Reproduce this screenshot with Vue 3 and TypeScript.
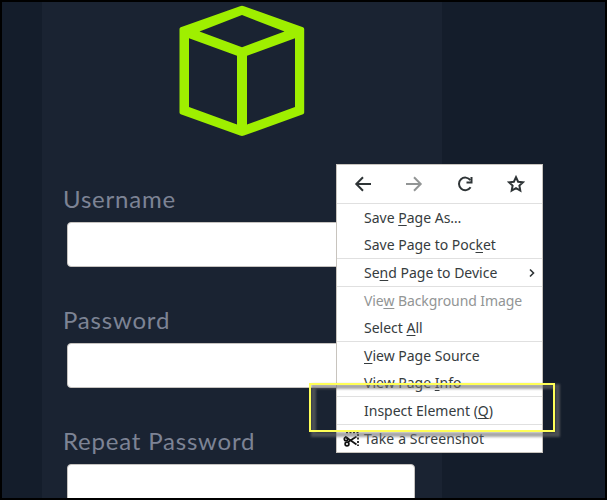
<script setup lang="ts">
interface MenuItem {
  before: string
  key?: string
  after?: string
  disabled?: boolean
  submenu?: boolean
  icon?: boolean
}

const fields: string[] = ['Username', 'Password', 'Repeat Password']

const groups: MenuItem[][] = [
  [
    { before: 'Save ', key: 'P', after: 'age As…' },
    { before: 'Save Page to Poc', key: 'k', after: 'et' },
  ],
  [{ before: 'Se', key: 'n', after: 'd Page to Device', submenu: true }],
  [
    { before: 'Vie', key: 'w', after: ' Background Image', disabled: true },
    { before: 'Select ', key: 'A', after: 'll' },
  ],
  [
    { before: '', key: 'V', after: 'iew Page Source' },
    { before: 'View Page ', key: 'I', after: 'nfo' },
  ],
  [{ before: 'Inspect Element (', key: 'Q', after: ')' }],
  [{ before: 'Take a Screenshot', icon: true }],
]
</script>

<template>
  <div class="page">
    <main class="card">
      <svg class="logo" width="126" height="132" viewBox="0 0 126 132">
        <path
          fill="#9fef00"
          fill-rule="evenodd"
          d="M61 1.300Q63 .4 65 1.300L124 22.300Q125.200 22.800 125.200 24V107.500Q125.200 108.700 124 109.200L65 130.500Q63 131.400 61 130.500L1.700 109.200Q.5 108.700 .5 107.500V24Q.5 22.800 1.700 22.300ZM63 10 20.500 26.500 63 42.300 105.500 26.500ZM10 33.300V102L58 119.500V50.700ZM116 33.300 68 50.700V119.500L116 102Z"
        />
      </svg>
      <form class="form">
        <div v-for="label in fields" :key="label" class="field">
          <label class="label"><span>{{ label }}</span></label>
          <div class="input"></div>
        </div>
      </form>
    </main>

    <div class="menu">
      <div class="toolbar">
        <svg width="18" height="18" viewBox="0 0 18 18"><path d="M17 9H2.500M9 2.300 2.300 9 9 15.700" /></svg>
        <svg class="dim" width="18" height="18" viewBox="0 0 18 18"><path d="M1 9H15.500M9 2.300 15.700 9 9 15.700" /></svg>
        <svg width="18" height="18" viewBox="0 0 18 18">
          <path d="M14.600 12.300A6.300 6.300 0 1 1 14.400 5.200" />
          <path d="M10.500 7.500H15.500V2" />
        </svg>
        <svg width="18" height="18" viewBox="0 0 18 18">
          <path d="M9 2.200 11.100 6.700 16 7.300 12.400 10.600 13.300 15.600 9 13.200 4.700 15.600 5.600 10.600 2 7.300 6.900 6.700Z" />
        </svg>
      </div>
      <div v-for="(group, i) in groups" :key="i" class="group">
        <div
          v-for="item in group"
          :key="item.before + item.key"
          class="item"
          :class="{ disabled: item.disabled, action: item.icon }"
        >
          <span class="slot">
            <svg v-if="item.icon" class="scissors" width="17" height="16" viewBox="0 0 17 16">
              <path class="dots" d="M3 1.500H16M15 3V15" />
              <path d="M2 5.500 13.500 13.500M13.500 5.500 5 11" />
              <circle cx="3" cy="8" r="1.700" />
              <circle cx="4" cy="13" r="1.900" />
            </svg>
          </span>
          <span class="text">{{ item.before }}<u v-if="item.key">{{ item.key }}</u>{{ item.after }}</span>
          <svg v-if="item.submenu" class="chevron" width="6" height="10" viewBox="0 0 6 10"><path d="M1 1.500 4.500 5 1 8.500" /></svg>
        </div>
      </div>
    </div>

    <div class="highlight"></div>
  </div>
</template>

<style>
body {
  margin: 0;
}
</style>

<style scoped>
.page {
  position: relative;
  box-sizing: border-box;
  width: 607px;
  height: 500px;
  overflow: hidden;
  border: 2px solid #000;
  background: #141d2b;
}
.card {
  display: flex;
  flex-direction: column;
  box-sizing: border-box;
  width: 400px;
  height: 496px;
  margin-left: 40px;
  padding: 3px 27px 0 21px;
  overflow: hidden;
  background: #1a2332;
}
.logo {
  flex: none;
  margin-left: 116px;
}
.form {
  display: flex;
  flex-direction: column;
  margin-top: 44px;
}
.field {
  height: 121px;
}
.label {
  display: block;
  height: 41px;
  color: #7d8395;
  font: 24px/36px Lato, "Noto Sans", sans-serif;
  letter-spacing: 0.8px;
  white-space: nowrap;
}
.input {
  box-sizing: border-box;
  height: 45px;
  margin-left: 4px;
  border: 1px solid #c6c3c0;
  border-radius: 4px;
  background: #fff;
}
.menu {
  position: absolute;
  left: 334px;
  top: 162px;
  box-sizing: border-box;
  width: 207px;
  height: 289px;
  border: 1px solid #c8c4be;
  background: #fff;
  color: #363c3e;
}
.toolbar {
  display: flex;
  align-items: center;
  justify-content: space-between;
  height: 38px;
  padding: 0 17px;
}
.toolbar path {
  fill: none;
  stroke: #2e3436;
  stroke-width: 2;
}
.toolbar .dim path {
  stroke: #929595;
}
.group {
  border-top: 1px solid #e0e0e0;
}
.item {
  display: flex;
  align-items: center;
  height: 27px;
  font: 14px/27px "Noto Sans", sans-serif;
  white-space: pre;
}
.item.disabled {
  color: #929595;
  letter-spacing: -0.08px;
}
.item.action {
  letter-spacing: 0.12px;
}
.slot {
  display: flex;
  width: 21px;
  padding-left: 6px;
}
.text {
  flex: 1;
}
.text u {
  text-decoration-thickness: 1px;
  text-underline-offset: 2px;
  text-decoration-skip-ink: none;
}
.chevron {
  margin-right: 7px;
  fill: none;
  stroke: #2e3436;
  stroke-width: 1.6;
}
.scissors {
  fill: none;
  stroke: #111;
  stroke-width: 1.7;
}
.scissors .dots {
  stroke-dasharray: 2 1.500;
}
.highlight {
  position: absolute;
  left: 307px;
  top: 381px;
  width: 246px;
  height: 49px;
}
.highlight::before,
.highlight::after {
  content: "";
  position: absolute;
  box-sizing: border-box;
}
.highlight::before {
  inset: 1px -5px -5px 2px;
  border: 5px solid rgba(110, 110, 110, 0.6);
  filter: blur(1px);
}
.highlight::after {
  inset: 0;
  border: 2px solid #ffff57;
}
</style>
